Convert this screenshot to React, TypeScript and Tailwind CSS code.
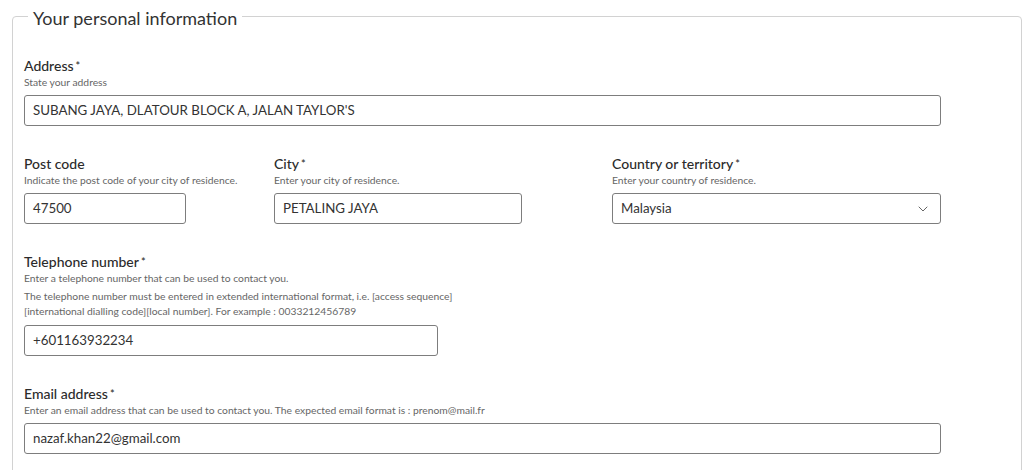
import { ChevronDown } from 'lucide-react';

const font = { fontFamily: 'Lato, "Open Sans", sans-serif' };

function Label({ text, required }: { text: string; required?: boolean }) {
  return (
    <div className="text-[14px] leading-[18px] font-medium text-[#2b2b2b]">
      {text}
      {required && <span className="ml-[2px] text-[11px] align-top">*</span>}
    </div>
  );
}

function Hint({ children }: { children: React.ReactNode }) {
  return <div className="text-[10.3px] leading-[14px] text-[#666]">{children}</div>;
}

function TextBox({ value, width }: { value: string; width: string }) {
  return (
    <div
      className={`${width} h-[31px] mt-[6px] flex items-center px-[8px] border border-[#7d7d7d] rounded-[3px] bg-white text-[13.3px] text-[#333]`}
    >
      {value}
    </div>
  );
}

export default function App() {
  return (
    <div className="min-h-screen bg-white pl-[12px] pt-[4px]" style={font}>
      <fieldset className="w-[1010px] border border-[#d2d2d2] rounded-[4px] px-[11px] pt-[29px] pb-[40px]">
        <legend className="ml-[4px] px-[5px] text-[18px] leading-[24px] text-[#333]">
          <span className="relative top-[2px]">Your personal information</span>
        </legend>

        <div className="flex flex-col gap-[29px]">
          <div>
            <Label text="Address" required />
            <Hint>State your address</Hint>
            <TextBox value="SUBANG JAYA, DLATOUR BLOCK A, JALAN TAYLOR'S" width="w-[917px]" />
          </div>

          <div className="flex">
            <div className="w-[250px]">
              <Label text="Post code" />
              <Hint>Indicate the post code of your city of residence.</Hint>
              <TextBox value="47500" width="w-[162px]" />
            </div>
            <div className="w-[338px]">
              <Label text="City" required />
              <Hint>Enter your city of residence.</Hint>
              <TextBox value="PETALING JAYA" width="w-[248px]" />
            </div>
            <div className="w-[329px]">
              <Label text="Country or territory" required />
              <Hint>Enter your country of residence.</Hint>
              <div className="relative w-[329px] h-[31px] mt-[6px] flex items-center px-[8px] border border-[#7d7d7d] rounded-[3px] bg-white text-[13.3px] text-[#333]">
                Malaysia
                <ChevronDown size={16} strokeWidth={1.5} className="absolute right-[9px] text-[#666]" />
              </div>
            </div>
          </div>

          <div>
            <Label text="Telephone number" required />
            <Hint>Enter a telephone number that can be used to contact you.</Hint>
            <div className="mt-[4px] text-[10.3px] leading-[15px] text-[#666] w-[480px]">
              The telephone number must be entered in extended international format, i.e. [access sequence]
              <br />
              [international dialling code][local number]. For example : 0033212456789
            </div>
            <TextBox value="+601163932234" width="w-[414px]" />
          </div>

          <div>
            <Label text="Email address" required />
            <Hint>
              Enter an email address that can be used to contact you. The expected email format is : prenom@mail.fr
            </Hint>
            <TextBox value="nazaf.khan22@gmail.com" width="w-[917px]" />
          </div>
        </div>
      </fieldset>
    </div>
  );
}
